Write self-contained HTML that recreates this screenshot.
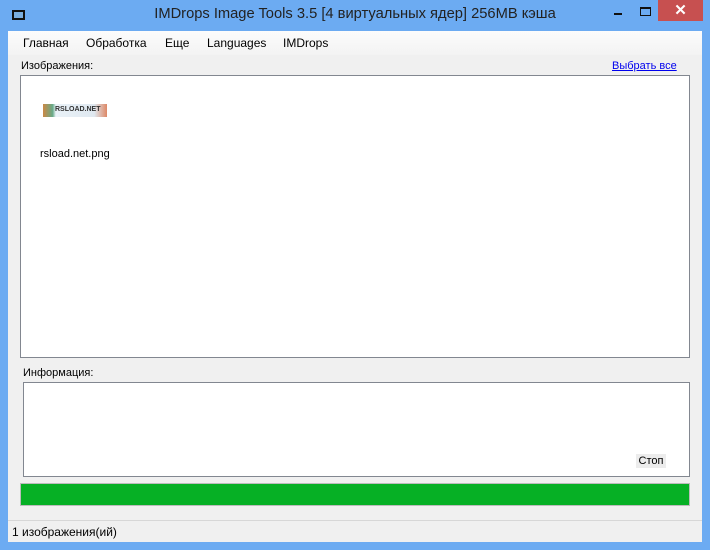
<!DOCTYPE html>
<html><head><meta charset="utf-8"><style>
*{margin:0;padding:0;box-sizing:border-box}
body{width:710px;height:550px;background:#6cabf2;font-family:"Liberation Sans",sans-serif;font-size:11px;position:relative;overflow:hidden;color:#000}
.a{position:absolute}
</style></head><body>
<div class="a" style="left:0;top:0;width:710px;height:31px;background:#6cabf2"></div>
<div class="a" style="left:12px;top:10px;width:13px;height:10px;background:#111;border:1px solid #111"><div style="margin:1px;width:9px;height:6px;background:#7aaee0"></div></div>
<div class="a" style="left:0;top:6px;width:710px;text-align:center;font-size:14.7px;color:#222">IMDrops Image Tools 3.5 [4 виртуальных ядер] 256MB кэша</div>
<div class="a" style="left:614px;top:13px;width:8px;height:2px;background:#111"></div>
<div class="a" style="left:640px;top:7px;width:11px;height:9px;border:1px solid #111;border-top-width:2px"></div>
<div class="a" style="left:658px;top:0;width:45px;height:21px;background:#c75050;color:#fff;text-align:center;font-size:15px;font-weight:bold;line-height:21px">✕</div>
<div class="a" style="left:8px;top:31px;width:694px;height:511px;background:#f0f0f0"></div>
<div class="a" style="left:8px;top:31px;width:694px;height:24px;background:linear-gradient(#fcfcfc,#f3f3f3)"></div>
<div class="a" style="top:36px;left:23px;font-size:12px">Главная</div>
<div class="a" style="top:36px;left:86px;font-size:12px">Обработка</div>
<div class="a" style="top:36px;left:165px;font-size:12px">Еще</div>
<div class="a" style="top:36px;left:207px;font-size:12px">Languages</div>
<div class="a" style="top:36px;left:283px;font-size:12px">IMDrops</div>
<div class="a" style="top:60px;left:21px">Изображения:</div>
<div class="a" style="top:60px;left:612px;color:#00e;text-decoration:underline">Выбрать все</div>
<div class="a" style="left:20px;top:75px;width:670px;height:283px;background:#fff;border:1px solid #828790"></div>
<div class="a" style="left:43px;top:104px;width:64px;height:13px;background:linear-gradient(90deg,#c84 0,#6a8 15%,#eaf2f8 20%,#dfe8f0 80%,#d86 100%)"><div style="margin:2px 0 0 12px;font-size:7px;font-weight:bold;color:#333">RSLOAD.NET</div></div>
<div class="a" style="top:148px;left:40px">rsload.net.png</div>
<div class="a" style="top:367px;left:23px">Информация:</div>
<div class="a" style="left:23px;top:382px;width:667px;height:95px;background:#fff;border:1px solid #828790"></div>
<div class="a" style="left:636px;top:454px;width:30px;height:14px;background:#ececec;text-align:center;line-height:14px">Стоп</div>
<div class="a" style="left:20px;top:483px;width:670px;height:23px;background:#06b025;border:1px solid #bcbcbc"></div>
<div class="a" style="left:8px;top:520px;width:694px;height:1px;background:#d7d7d7"></div>
<div class="a" style="top:525px;left:12px;font-size:12px">1 изображения(ий)</div>
</body></html>
